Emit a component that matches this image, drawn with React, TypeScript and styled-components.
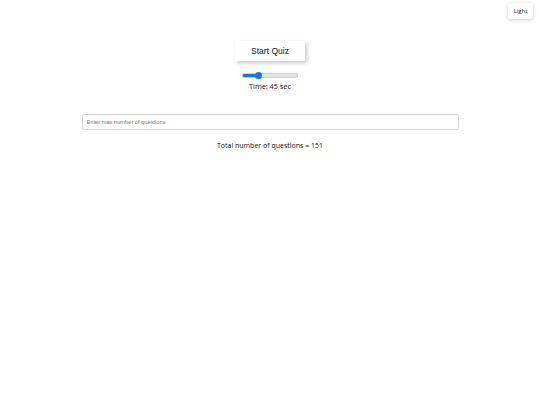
import React, { useState } from "react";
import styled, { createGlobalStyle } from "styled-components";

const GlobalStyle = createGlobalStyle`
  html, body {
    margin: 0;
    padding: 0;
    background: #fff;
  }
  body {
    font-family: "Open Sans", "Liberation Sans", sans-serif;
    color: #111;
  }
`;

export default function App() {
  const [time, setTime] = useState<number>(45);
  const [total] = useState<number>(151);

  return (
    <>
      <GlobalStyle />
      <Page>
        <ThemeToggle>Light</ThemeToggle>
        <StartButton>Start Quiz</StartButton>
        <TimerBox>
          <Slider
            type="range"
            min={0}
            max={180}
            value={time}
            fill={(time / 180) * 100}
            onChange={(e) => setTime(Number(e.target.value))}
          />
          <TimeLabel>Time: {time} sec</TimeLabel>
        </TimerBox>
        <QuestionInput placeholder="Enter max number of questions" />
        <TotalLabel>Total number of questions = {total}</TotalLabel>
      </Page>
    </>
  );
}

const Page = styled.div`
  position: relative;
  width: 540px;
  height: 405px;
  display: flex;
  flex-direction: column;
  align-items: center;
  padding-top: 41px;
  box-sizing: border-box;
`;

const ThemeToggle = styled.button`
  position: absolute;
  top: 3px;
  right: 7px;
  width: 25px;
  height: 16px;
  padding: 0;
  border: none;
  border-radius: 3px;
  background: #fff;
  box-shadow: 0 1px 4px rgba(0, 0, 0, 0.18);
  font-family: "Open Sans", sans-serif;
  font-size: 6px;
  color: #222;
  cursor: pointer;
`;

const StartButton = styled.button`
  width: 70px;
  height: 20px;
  padding: 0;
  border: none;
  border-radius: 1px;
  background: #fff;
  box-shadow: 2px 2px 4px rgba(0, 0, 0, 0.22);
  font-family: "Liberation Sans", Arial, sans-serif;
  font-size: 8.5px;
  color: #111;
  cursor: pointer;
`;

const TimerBox = styled.div`
  display: flex;
  flex-direction: column;
  align-items: center;
  margin-top: 12px;
`;

const Slider = styled.input<{ fill: number }>`
  -webkit-appearance: none;
  appearance: none;
  width: 54px;
  height: 3px;
  margin: 0;
  border-radius: 2px;
  background: linear-gradient(
    to right,
    #1a73e8 0%,
    #1a73e8 ${({ fill }) => fill}%,
    #e4e4e4 ${({ fill }) => fill}%,
    #e4e4e4 100%
  );
  border: 0.5px solid #cfcfcf;
  outline: none;

  &::-webkit-slider-thumb {
    -webkit-appearance: none;
    width: 7px;
    height: 7px;
    border-radius: 50%;
    background: #1a73e8;
    cursor: pointer;
  }
`;

const TimeLabel = styled.div`
  margin-top: 3px;
  font-size: 7.3px;
  color: #111;
`;

const QuestionInput = styled.input`
  margin-top: 23px;
  width: 377px;
  height: 16px;
  box-sizing: border-box;
  padding: 0 4px;
  border: 1px solid #d6d6d6;
  border-radius: 2px;
  font-family: "Liberation Sans", Arial, sans-serif;
  font-size: 5.7px;
  color: #333;
  outline: none;

  &::placeholder {
    color: #777;
  }
`;

const TotalLabel = styled.div`
  margin-top: 11px;
  font-size: 7px;
  color: #111;
`;
